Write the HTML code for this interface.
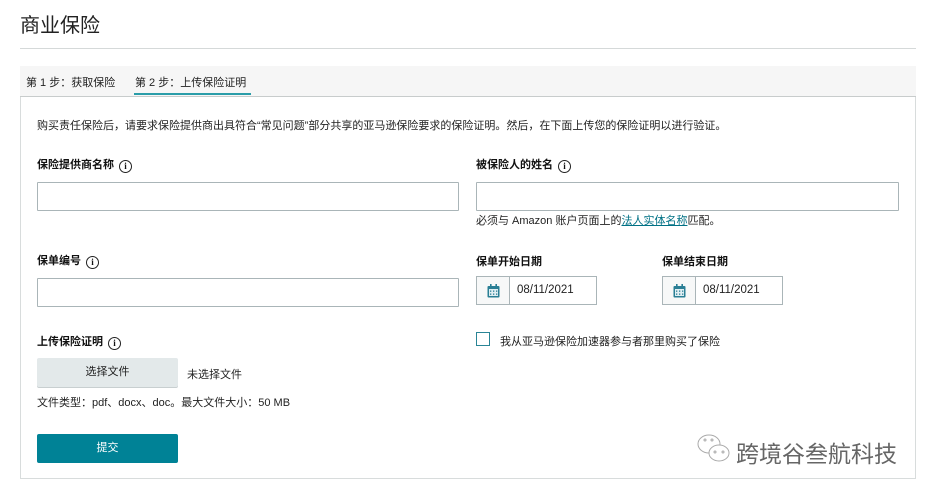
<!DOCTYPE html><html><head><meta charset="utf-8"><style>
*{box-sizing:border-box;margin:0;padding:0}
body{width:927px;height:491px;background:#fff;font-family:"Liberation Sans","Noto Sans CJK SC",sans-serif;color:#111;position:relative;overflow:hidden}
.a{position:absolute}
.t{font-size:11px;color:#222}
.lab{font-size:11px;font-weight:bold;color:#111}
.inp{border:1px solid #aab5b8;background:#fff;border-radius:1px}
.info{display:inline-block;width:13px;height:13px;border:1.3px solid #222;border-radius:50%;font-size:9px;text-align:center;line-height:11px;font-weight:bold;margin-left:5px;vertical-align:-1px;font-family:"Liberation Serif",serif}
.date{border:1px solid #aab5b8;display:flex;height:29px}
.date .ic{width:33px;border-right:1px solid #aab5b8;background:#f7f8f8;display:flex;align-items:center;justify-content:center}
.date .v{padding-left:7px;line-height:27px;font-size:11.5px;color:#222}
</style></head><body>
<div class="a" style="left:20px;top:9px;font-size:20px;color:#222">商业保险</div>
<div class="a" style="left:20px;top:48px;width:896px;height:1px;background:#d5d9d9"></div>
<div class="a" style="left:20px;top:66px;width:896px;height:31px;background:#f6f6f6;border-bottom:1px solid #c8cccc"></div>
<div class="a t" style="left:26px;top:74px">第 1 步：获取保险</div>
<div class="a t" style="left:135px;top:74px">第 2 步：上传保险证明</div>
<div class="a" style="left:134px;top:93px;width:117px;height:2px;background:#2a9da9"></div>
<div class="a" style="left:20px;top:97px;width:896px;height:382px;border:1px solid #d8dcdc;border-top:none"></div>
<div class="a t" style="left:37px;top:117px">购买责任保险后，请要求保险提供商出具符合“常见问题”部分共享的亚马逊保险要求的保险证明。然后，在下面上传您的保险证明以进行验证。</div>
<div class="a lab" style="left:37px;top:156px">保险提供商名称<span class="info">i</span></div>
<div class="a inp" style="left:37px;top:182px;width:422px;height:29px"></div>
<div class="a lab" style="left:476px;top:156px">被保险人的姓名<span class="info">i</span></div>
<div class="a inp" style="left:476px;top:182px;width:423px;height:29px"></div>
<div class="a t" style="left:476px;top:212px">必须与 Amazon 账户页面上的<span style="color:#007185;text-decoration:underline">法人实体名称</span>匹配。</div>
<div class="a lab" style="left:37px;top:252px">保单编号<span class="info">i</span></div>
<div class="a inp" style="left:37px;top:278px;width:422px;height:29px"></div>
<div class="a lab" style="left:476px;top:253px">保单开始日期</div>
<div class="a lab" style="left:662px;top:253px">保单结束日期</div>
<div class="a date" style="left:476px;top:276px;width:121px"><div class="ic"><svg width="13" height="14" viewBox="0 0 13 14"><rect x="0.5" y="2" width="12" height="11.5" rx="1" fill="#2a7f95"/><rect x="2" y="5" width="9" height="7" fill="#dfeef2"/><rect x="3" y="0" width="1.6" height="3" fill="#2a7f95"/><rect x="8.4" y="0" width="1.6" height="3" fill="#2a7f95"/><g fill="#2a7f95"><rect x="3" y="6.5" width="1.3" height="1.3"/><rect x="6" y="6.5" width="1.3" height="1.3"/><rect x="9" y="6.5" width="1.3" height="1.3"/><rect x="3" y="9.5" width="1.3" height="1.3"/><rect x="6" y="9.5" width="1.3" height="1.3"/><rect x="9" y="9.5" width="1.3" height="1.3"/></g></svg></div><div class="v">08/11/2021</div></div>
<div class="a date" style="left:662px;top:276px;width:121px"><div class="ic"><svg width="13" height="14" viewBox="0 0 13 14"><rect x="0.5" y="2" width="12" height="11.5" rx="1" fill="#2a7f95"/><rect x="2" y="5" width="9" height="7" fill="#dfeef2"/><rect x="3" y="0" width="1.6" height="3" fill="#2a7f95"/><rect x="8.4" y="0" width="1.6" height="3" fill="#2a7f95"/><g fill="#2a7f95"><rect x="3" y="6.5" width="1.3" height="1.3"/><rect x="6" y="6.5" width="1.3" height="1.3"/><rect x="9" y="6.5" width="1.3" height="1.3"/><rect x="3" y="9.5" width="1.3" height="1.3"/><rect x="6" y="9.5" width="1.3" height="1.3"/><rect x="9" y="9.5" width="1.3" height="1.3"/></g></svg></div><div class="v">08/11/2021</div></div>
<div class="a" style="left:476px;top:332px;width:14px;height:14px;border:1.3px solid #2a8596"></div>
<div class="a t" style="left:500px;top:333px">我从亚马逊保险加速器参与者那里购买了保险</div>
<div class="a lab" style="left:37px;top:333px">上传保险证明<span class="info">i</span></div>
<div class="a" style="left:37px;top:358px;width:141px;height:29px;background:#e3e9ea;border-radius:2px;box-shadow:0 1px 0 #c8cfd0;font-size:11px;text-align:center;line-height:29px;color:#222">选择文件</div>
<div class="a t" style="left:187px;top:366px">未选择文件</div>
<div class="a t" style="left:37px;top:394px">文件类型：pdf、docx、doc。最大文件大小：50 MB</div>
<div class="a" style="left:37px;top:434px;width:141px;height:29px;background:#008296;border-radius:2px;font-size:11px;text-align:center;line-height:29px;color:#fff">提交</div>
<svg class="a" style="left:696px;top:433px" width="38" height="34" viewBox="0 0 38 34" fill="none" stroke="#aaa" stroke-width="1"><ellipse cx="13" cy="11" rx="11" ry="9" fill="#fff"/><ellipse cx="23" cy="20" rx="10" ry="8" fill="#fff"/><circle cx="9" cy="7" r="1"/><circle cx="16" cy="7" r="1"/><circle cx="19" cy="19" r="1"/><circle cx="27" cy="19" r="1"/></svg>
<div class="a" style="left:736px;top:435px;font-size:23px;color:#666">跨境谷叁航科技</div>
</body></html>
